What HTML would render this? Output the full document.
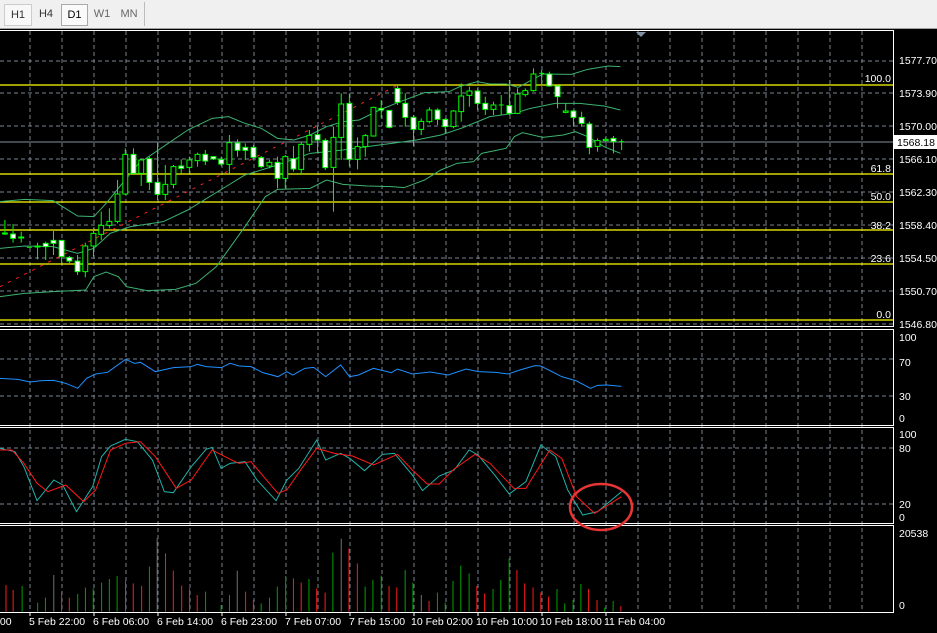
<!DOCTYPE html>
<html><head><meta charset="utf-8"><style>
html,body{margin:0;padding:0;background:#000;width:937px;height:633px;overflow:hidden;font-family:"Liberation Sans",sans-serif}
.tb{position:absolute;left:0;top:0;width:937px;height:28px;background:#f0f0f0;border-bottom:1px solid #a0a0a0}
.bt{position:absolute;top:4px;height:20px;line-height:20px;font-size:11px;color:#333;text-align:center}
svg{position:absolute;left:0;top:0}
.n *{vector-effect:non-scaling-stroke}
.g{stroke:#7a8590;stroke-dasharray:4 3;stroke-width:1}
.k line{stroke:#00ff00}
.k rect{stroke:#00ff00}
.w{fill:#fff}.b{fill:#000}
text{font-family:"Liberation Sans",sans-serif;font-size:10.5px;fill:#fff}
.y{fill:#ffff00}
</style></head><body>
<div class="tb">
<div class="bt" style="left:4px;width:26px;border:1px solid #ccc;background:#f8f8f8">H1</div>
<div class="bt" style="left:34px;width:24px">H4</div>
<div class="bt" style="left:61px;width:25px;border:1px solid #aaa;background:#fafafa;color:#000">D1</div>
<div class="bt" style="left:90px;width:24px;color:#666">W1</div>
<div class="bt" style="left:116px;width:26px;color:#666">MN</div>
<div style="position:absolute;left:144px;top:2px;width:1px;height:24px;background:#bbb"></div>
</div>
<svg width="937" height="633" viewBox="0 0 937 633" style="top:0">
<rect x="0" y="29" width="937" height="604" fill="#000"/>
<!-- vertical grid -->
<g class="g">
<path d="M30 31V612M62 31V612M94 31V612M126 31V612M158 31V612M190 31V612M222 31V612M254 31V612M286 31V612M318 31V612M350 31V612M382 31V612M414 31V612M446 31V612M478 31V612M510 31V612M542 31V612M574 31V612M606 31V612M638 31V612M670 31V612M702 31V612M734 31V612M766 31V612M798 31V612M830 31V612M862 31V612"/>
<path d="M0 61H893M0 93H893M0 126H893M0 159H893M0 192H893M0 225H893M0 258H893M0 291H893M0 324H893M0 359H893M0 396H893M0 448H893M0 504H893"/>
</g>
<!-- panel borders -->
<g stroke="#fff" stroke-width="1" fill="none">
<path d="M0 30.5H893.5V326.5H0"/>
<path d="M0 329.5H893.5V425.5H0"/>
<path d="M0 427.5H893.5V523.5H0"/>
<path d="M0 525.5H893.5V612.5H0"/>
</g>
<polygon points="636,32 646,32 641,37" fill="#8090a0"/>
<!-- fib lines -->
<g stroke="#ffff00" stroke-width="1.2">
<path d="M0 85H893M0 174H893M0 202H893M0 230H893M0 264H893M0 320H893"/>
</g>
<line x1="0" y1="142" x2="893" y2="142" stroke="#8090a0"/>
<g class="y" text-anchor="end">
<text x="891" y="82">100.0</text><text x="891" y="172">61.8</text><text x="891" y="200">50.0</text><text x="891" y="229">38.2</text><text x="891" y="262">23.6</text><text x="891" y="318">0.0</text>
</g>
<g>
<text x="899" y="64">1577.70</text><text x="899" y="97">1573.90</text><text x="899" y="130">1570.00</text><text x="899" y="163">1566.10</text><text x="899" y="196">1562.30</text><text x="899" y="229">1558.40</text><text x="899" y="262">1554.50</text><text x="899" y="295">1550.70</text><text x="899" y="328">1546.80</text>
<text x="899" y="341">100</text><text x="899" y="366">70</text><text x="899" y="400">30</text><text x="899" y="422">0</text>
<text x="899" y="438">100</text><text x="899" y="452">80</text><text x="899" y="508">20</text><text x="899" y="521">0</text>
<text x="899" y="537">20538</text><text x="899" y="609">0</text>
</g>
<rect x="894" y="135" width="43" height="14" fill="#fff"/>
<text x="897" y="146" fill="#000" style="fill:#000">1568.18</text>
<!-- time axis -->
<g stroke="#fff"><path d="M30 612v4M94 612v4M158 612v4M222 612v4M286 612v4M350 612v4M414 612v4M478 612v4M542 612v4M606 612v4"/></g>
<g>
<text x="-3" y="625">:00</text><text x="29" y="625">5 Feb 22:00</text><text x="93" y="625">6 Feb 06:00</text><text x="157" y="625">6 Feb 14:00</text><text x="221" y="625">6 Feb 23:00</text><text x="285" y="625">7 Feb 07:00</text><text x="349" y="625">7 Feb 15:00</text><text x="411" y="625">10 Feb 02:00</text><text x="476" y="625">10 Feb 10:00</text><text x="540" y="625">10 Feb 18:00</text><text x="604" y="625">11 Feb 04:00</text>
</g>
<!-- main chart in zoom coords -->
<g class="n" transform="translate(0,60) scale(0.40816,0.33333)" fill="none">
<line x1="0" y1="680" x2="975" y2="75" stroke="#ff2020" stroke-dasharray="3 6" stroke-width="1"/>
<g stroke="#3cb371" stroke-width="1">
<polyline points="0,425 60,418 130,422 190,468 230,470 260,430 300,370 340,310 400,260 460,210 520,175 560,170 600,190 640,205 680,235 720,240 760,225 800,200 840,185 880,180 930,150 980,125 1040,98 1100,95 1130,78 1170,65 1200,72 1240,72 1270,82 1310,55 1330,42 1400,43 1440,28 1490,18 1520,20"/>
<polyline points="0,565 60,558 130,560 190,580 230,565 270,520 320,500 400,485 460,450 540,390 600,345 680,315 760,280 840,270 900,260 960,250 1020,240 1080,225 1130,205 1200,170 1260,160 1300,145 1360,130 1420,130 1480,138 1520,150"/>
<polyline points="0,710 60,700 130,695 210,690 230,650 260,636 290,650 310,680 360,692 430,688 480,670 530,620 600,500 650,410 680,388 760,385 800,360 840,373 900,378 960,380 990,383 1040,360 1080,330 1120,310 1160,305 1180,280 1220,270 1240,265 1260,230 1280,218 1330,232 1380,225 1410,215 1440,230 1480,260 1520,280"/>
</g>
<g class="k">
<line x1="12" y1="480" x2="12" y2="525"/><rect class="b" x="6" y="519" width="12" height="3"/>
<line x1="32" y1="492" x2="32" y2="548"/><rect class="w" x="26" y="522" width="12" height="13"/>
<line x1="52" y1="515" x2="52" y2="548"/><rect class="b" x="46" y="531" width="12" height="3"/>
<line x1="66" y1="562" x2="78" y2="562"/>
<line x1="92" y1="548" x2="92" y2="598"/><rect class="b" x="86" y="558" width="12" height="3"/>
<line x1="112" y1="545" x2="112" y2="600"/><rect class="w" x="106" y="550" width="12" height="10"/>
<line x1="131" y1="508" x2="131" y2="585"/><rect class="w" x="125" y="541" width="12" height="9"/>
<line x1="151" y1="541" x2="151" y2="610"/><rect class="w" x="145" y="541" width="12" height="49"/>
<line x1="170" y1="588" x2="170" y2="612"/><rect class="w" x="164" y="592" width="12" height="11"/>
<line x1="190" y1="585" x2="190" y2="645"/><rect class="w" x="184" y="603" width="12" height="32"/>
<line x1="209" y1="548" x2="209" y2="652"/><rect class="b" x="203" y="558" width="12" height="77"/>
<line x1="229" y1="505" x2="229" y2="590"/><rect class="b" x="223" y="520" width="12" height="38"/>
<line x1="248" y1="455" x2="248" y2="540"/><rect class="b" x="242" y="496" width="12" height="27"/>
<line x1="268" y1="445" x2="268" y2="505"/><rect class="b" x="262" y="484" width="12" height="12"/>
<line x1="288" y1="360" x2="288" y2="490"/><rect class="b" x="282" y="402" width="12" height="82"/>
<line x1="307" y1="265" x2="307" y2="405"/><rect class="b" x="301" y="283" width="12" height="119"/>
<line x1="327" y1="265" x2="327" y2="345"/><rect class="w" x="321" y="283" width="12" height="57"/>
<line x1="346" y1="295" x2="346" y2="378"/><rect class="b" x="340" y="300" width="12" height="40"/>
<line x1="366" y1="290" x2="366" y2="390"/><rect class="w" x="360" y="296" width="12" height="71"/>
<line x1="386" y1="248" x2="386" y2="420"/><rect class="w" x="380" y="367" width="12" height="36"/>
<line x1="405" y1="315" x2="405" y2="420"/><rect class="b" x="399" y="373" width="12" height="30"/>
<line x1="425" y1="315" x2="425" y2="385"/><rect class="b" x="419" y="320" width="12" height="53"/>
<line x1="444" y1="298" x2="444" y2="340"/><rect class="w" x="438" y="318" width="12" height="7"/>
<line x1="464" y1="290" x2="464" y2="340"/><rect class="b" x="458" y="300" width="12" height="22"/>
<line x1="484" y1="278" x2="484" y2="320"/><rect class="b" x="478" y="283" width="12" height="19"/>
<line x1="503" y1="270" x2="503" y2="315"/><rect class="w" x="497" y="283" width="12" height="20"/>
<line x1="523" y1="288" x2="523" y2="300"/><rect class="w" x="517" y="290" width="12" height="7"/>
<line x1="542" y1="290" x2="542" y2="318"/><rect class="w" x="536" y="298" width="12" height="14"/>
<line x1="562" y1="225" x2="562" y2="340"/><rect class="b" x="556" y="248" width="12" height="65"/>
<line x1="582" y1="238" x2="582" y2="290"/><rect class="w" x="576" y="249" width="12" height="22"/>
<line x1="601" y1="250" x2="601" y2="300"/><rect class="w" x="595" y="262" width="12" height="9"/>
<line x1="621" y1="255" x2="621" y2="298"/><rect class="w" x="615" y="262" width="12" height="30"/>
<line x1="640" y1="288" x2="640" y2="325"/><rect class="w" x="634" y="293" width="12" height="27"/>
<line x1="660" y1="300" x2="660" y2="325"/><rect class="b" x="654" y="307" width="12" height="11"/>
<line x1="680" y1="290" x2="680" y2="385"/><rect class="w" x="674" y="307" width="12" height="48"/>
<line x1="699" y1="285" x2="699" y2="385"/><rect class="b" x="693" y="290" width="12" height="65"/>
<line x1="719" y1="258" x2="719" y2="335"/><rect class="w" x="713" y="296" width="12" height="31"/>
<line x1="738" y1="246" x2="738" y2="345"/><rect class="b" x="732" y="253" width="12" height="75"/>
<line x1="758" y1="210" x2="758" y2="275"/><rect class="b" x="752" y="226" width="12" height="27"/>
<line x1="778" y1="200" x2="778" y2="278"/><rect class="w" x="772" y="224" width="12" height="16"/>
<line x1="797" y1="235" x2="797" y2="330"/><rect class="w" x="791" y="241" width="12" height="82"/>
<line x1="817" y1="200" x2="817" y2="455"/><rect class="b" x="811" y="232" width="12" height="90"/>
<line x1="836" y1="100" x2="836" y2="300"/><rect class="b" x="830" y="132" width="12" height="100"/>
<line x1="856" y1="100" x2="856" y2="320"/><rect class="w" x="850" y="130" width="12" height="168"/>
<line x1="876" y1="232" x2="876" y2="328"/><rect class="b" x="870" y="260" width="12" height="38"/>
<line x1="895" y1="222" x2="895" y2="290"/><rect class="b" x="889" y="227" width="12" height="33"/>
<line x1="915" y1="140" x2="915" y2="230"/><rect class="b" x="909" y="142" width="12" height="86"/>
<line x1="934" y1="120" x2="934" y2="175"/><rect class="w" x="928" y="145" width="12" height="5"/>
<line x1="954" y1="150" x2="954" y2="205"/><rect class="w" x="948" y="151" width="12" height="51"/>
<line x1="974" y1="75" x2="974" y2="135"/><rect class="w" x="968" y="85" width="12" height="42"/>
<line x1="993" y1="100" x2="993" y2="200"/><rect class="w" x="987" y="130" width="12" height="42"/>
<line x1="1013" y1="165" x2="1013" y2="258"/><rect class="w" x="1007" y="172" width="12" height="36"/>
<line x1="1032" y1="175" x2="1032" y2="225"/><rect class="b" x="1026" y="184" width="12" height="24"/>
<line x1="1052" y1="142" x2="1052" y2="190"/><rect class="b" x="1046" y="150" width="12" height="35"/>
<line x1="1072" y1="145" x2="1072" y2="195"/><rect class="w" x="1066" y="150" width="12" height="28"/>
<line x1="1091" y1="175" x2="1091" y2="220"/><rect class="w" x="1085" y="178" width="12" height="22"/>
<line x1="1111" y1="150" x2="1111" y2="205"/><rect class="b" x="1105" y="153" width="12" height="47"/>
<line x1="1130" y1="70" x2="1130" y2="185"/><rect class="b" x="1124" y="108" width="12" height="47"/>
<line x1="1150" y1="80" x2="1150" y2="140"/><rect class="b" x="1144" y="93" width="12" height="13"/>
<line x1="1170" y1="85" x2="1170" y2="150"/><rect class="w" x="1164" y="93" width="12" height="37"/>
<line x1="1189" y1="110" x2="1189" y2="165"/><rect class="w" x="1183" y="130" width="12" height="18"/>
<line x1="1209" y1="125" x2="1209" y2="165"/><rect class="b" x="1203" y="135" width="12" height="13"/>
<line x1="1228" y1="105" x2="1228" y2="165"/><line x1="1222" y1="135" x2="1234" y2="135"/>
<line x1="1248" y1="60" x2="1248" y2="165"/><rect class="w" x="1242" y="137" width="12" height="23"/>
<line x1="1268" y1="85" x2="1268" y2="162"/><rect class="b" x="1262" y="102" width="12" height="58"/>
<line x1="1287" y1="85" x2="1287" y2="110"/><rect class="b" x="1281" y="92" width="12" height="12"/>
<line x1="1307" y1="25" x2="1307" y2="95"/><rect class="b" x="1301" y="42" width="12" height="50"/>
<line x1="1327" y1="30" x2="1327" y2="80"/><line x1="1321" y1="40" x2="1333" y2="40"/>
<line x1="1346" y1="35" x2="1346" y2="80"/><rect class="w" x="1340" y="42" width="12" height="36"/>
<line x1="1366" y1="75" x2="1366" y2="145"/><rect class="w" x="1360" y="78" width="12" height="32"/>
<line x1="1386" y1="130" x2="1386" y2="160"/><rect class="b" x="1380" y="153" width="12" height="4"/>
<line x1="1405" y1="150" x2="1405" y2="200"/><rect class="w" x="1399" y="153" width="12" height="19"/>
<line x1="1425" y1="155" x2="1425" y2="200"/><rect class="w" x="1419" y="172" width="12" height="18"/>
<line x1="1444" y1="185" x2="1444" y2="283"/><rect class="w" x="1438" y="192" width="12" height="70"/>
<line x1="1464" y1="235" x2="1464" y2="275"/><rect class="b" x="1458" y="242" width="12" height="17"/>
<line x1="1484" y1="232" x2="1484" y2="245"/><rect class="b" x="1478" y="238" width="12" height="4"/>
<line x1="1503" y1="228" x2="1503" y2="280"/><rect class="w" x="1497" y="235" width="12" height="10"/>
<line x1="1523" y1="238" x2="1523" y2="270"/><line x1="1517" y1="245" x2="1529" y2="245"/>
</g>
</g>
<!-- RSI -->
<g class="n" transform="translate(0,320) scale(0.5976,0.33333)" fill="none">
<polyline stroke="#1e90ff" stroke-width="1" points="0,175 30,178 50,186 70,182 90,181 110,190 130,205 145,175 160,162 180,157 210,118 225,130 235,127 260,155 290,143 320,140 330,133 345,140 370,143 385,130 400,138 420,140 440,158 465,170 480,155 490,165 510,145 525,142 545,170 570,135 585,170 600,165 625,145 655,158 665,147 690,162 720,156 750,165 780,147 800,155 830,157 850,162 870,150 895,137 905,138 940,170 965,183 988,205 1000,196 1015,195 1040,199"/>
</g>
<!-- Stoch -->
<g class="n" transform="translate(0,420) scale(0.5976,0.33333)" fill="none" stroke-width="1">
<polyline stroke="#20b2aa" points="0,85 25,95 40,140 62,242 90,180 105,195 128,275 155,200 170,110 185,78 210,58 230,65 255,120 275,215 290,218 320,140 345,88 355,82 370,145 385,130 410,125 430,180 462,242 480,180 500,145 530,60 545,120 570,100 585,115 610,152 640,103 660,100 690,165 707,212 735,168 760,150 785,90 800,105 830,170 852,222 880,185 905,75 930,110 950,210 975,285 1000,275 1040,215"/>
<polyline stroke="#ff1a1a" points="0,90 20,90 40,130 62,190 80,215 110,195 140,245 160,210 185,90 210,70 235,65 260,110 295,205 320,180 355,90 390,122 400,130 420,125 465,220 480,210 505,145 530,85 560,100 590,108 625,135 665,103 690,150 715,192 735,192 760,147 795,103 820,130 860,205 880,205 920,90 940,115 965,230 995,280 1040,230"/>
</g>
<ellipse cx="601" cy="507" rx="31" ry="23" fill="none" stroke="#e83535" stroke-width="2.5"/>
<!-- Volume -->
<g class="n" transform="translate(0,420) scale(0.5976,0.33333)" stroke-width="1">
<path stroke="#ff1a1a" d="M10 495V575M22 510V575M103 515V575M116 533V575M210 482V575M223 490V575M237 498V575M277 400V575M290 452V575M304 497V575M317 505V575M330 525V575M411 515V575M424 540V575M491 475V575M504 488V575M530 505V575M544 518V575M584 385V575M598 430V575M651 498V575M664 502V575M718 543V575M798 498V575M811 520V575M865 450V575M878 490V575M892 502V575M905 517V575M918 530V575M985 507V575M999 540V575M1039 558V575"/>
<path stroke="#00a000" d="M37 498V575M63 548V575M76 533V575M130 522V575M143 503V575M156 505V575M170 488V575M183 477V575M196 468V575M250 440V575M344 515V575M370 555V575M384 525V575M437 550V575M451 533V575M464 500V575M478 468V575M517 477V575M557 398V575M611 500V575M624 480V575M638 467V575M678 450V575M691 488V575M732 518V575M745 548V575M758 483V575M771 437V575M785 460V575M825 507V575M838 480V575M852 415V575M932 507V575M945 550V575M959 540V575M972 492V575M1012 563V575M1026 543V575"/>
<path stroke="#707070" d="M90 465V575M263 355V575M397 452V575M571 356V575M705 525V575"/>
</g>
</svg>
</body></html>
